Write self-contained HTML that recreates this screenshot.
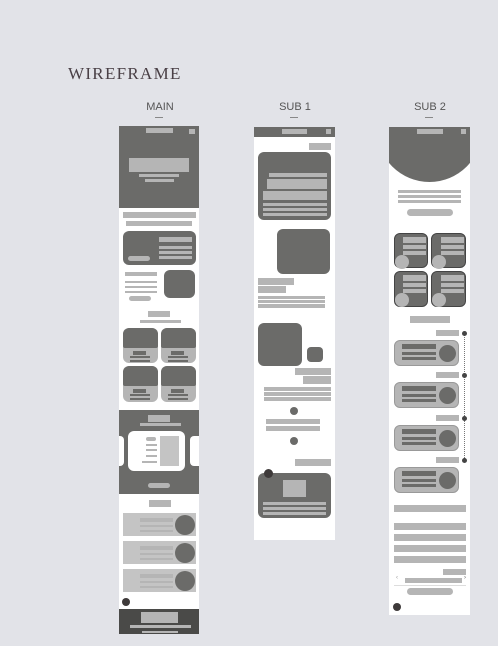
<!DOCTYPE html>
<html><head><meta charset="utf-8"><style>
body{margin:0;width:498px;height:646px;background:#e2e3e8;position:relative;overflow:hidden;font-family:"Liberation Sans",sans-serif}
div{position:absolute;box-sizing:border-box}
.w{background:#fff}.d{background:#6b6b69}.l{background:#b5b5b5}.m{background:#c4c4c4}
.r{border-radius:6px}.p{border-radius:4px}.c{border-radius:50%}
.t{font-size:11px;color:#555;width:60px;text-align:center}
.u{height:1px;width:8px;background:#888}
</style></head><body>
<div style="left:68px;top:64px;font-family:'Liberation Serif',serif;font-size:17px;color:#4a4046;letter-spacing:1.3px">WIREFRAME</div>
<div class="t" style="left:130px;top:101px">MAIN</div><div class="u" style="left:155px;top:117px"></div>
<div class="t" style="left:265px;top:101px">SUB 1</div><div class="u" style="left:290px;top:117px"></div>
<div class="t" style="left:400px;top:101px">SUB 2</div><div class="u" style="left:425px;top:117px"></div>

<!-- MAIN -->
<div class="w" style="left:119px;top:126px;width:80px;height:508px"></div>
<div class="d" style="left:119px;top:126px;width:80px;height:82px"></div>
<div class="l" style="left:146px;top:128px;width:27px;height:5px"></div>
<div class="l" style="left:189px;top:129px;width:6px;height:5px"></div>
<div class="l" style="left:129px;top:158px;width:60px;height:14px"></div>
<div class="l" style="left:139px;top:174px;width:40px;height:3px"></div>
<div class="l" style="left:145px;top:179px;width:29px;height:3px"></div>
<div class="l" style="left:123px;top:212px;width:73px;height:6px"></div>
<div class="l" style="left:126px;top:221px;width:66px;height:5px"></div>
<div class="d r" style="left:123px;top:231px;width:73px;height:34px"></div>
<div class="l" style="left:159px;top:237px;width:33px;height:5px"></div>
<div class="l" style="left:159px;top:246px;width:33px;height:3px"></div>
<div class="l" style="left:159px;top:251px;width:33px;height:3px"></div>
<div class="l" style="left:159px;top:256px;width:33px;height:3px"></div>
<div class="l p" style="left:128px;top:256px;width:22px;height:5px"></div>
<div class="l" style="left:125px;top:272px;width:32px;height:4px"></div>
<div class="l" style="left:125px;top:281px;width:32px;height:2px"></div>
<div class="l" style="left:125px;top:286px;width:32px;height:2px"></div>
<div class="l" style="left:125px;top:291px;width:32px;height:2px"></div>
<div class="l p" style="left:129px;top:296px;width:22px;height:5px"></div>
<div class="d r" style="left:164px;top:270px;width:31px;height:28px"></div>
<div class="l" style="left:148px;top:311px;width:22px;height:6px"></div>
<div class="l" style="left:140px;top:320px;width:41px;height:3px"></div>
<!-- grid -->
<div class="l r" style="left:123px;top:328px;width:35px;height:35px"></div>
<div class="d r" style="left:123px;top:328px;width:35px;height:20px;border-radius:6px 6px 2px 2px"></div>
<div class="l r" style="left:161px;top:328px;width:35px;height:35px"></div>
<div class="d r" style="left:161px;top:328px;width:35px;height:20px;border-radius:6px 6px 2px 2px"></div>
<div class="l r" style="left:123px;top:366px;width:35px;height:36px"></div>
<div class="d r" style="left:123px;top:366px;width:35px;height:20px;border-radius:6px 6px 2px 2px"></div>
<div class="l r" style="left:161px;top:366px;width:35px;height:36px"></div>
<div class="d r" style="left:161px;top:366px;width:35px;height:20px;border-radius:6px 6px 2px 2px"></div>
<div class="d" style="left:133px;top:351px;width:13px;height:4px"></div><div class="d" style="left:130px;top:356px;width:20px;height:2px"></div><div class="d" style="left:130px;top:360px;width:20px;height:2px"></div>
<div class="d" style="left:171px;top:351px;width:13px;height:4px"></div><div class="d" style="left:168px;top:356px;width:20px;height:2px"></div><div class="d" style="left:168px;top:360px;width:20px;height:2px"></div>
<div class="d" style="left:133px;top:389px;width:13px;height:4px"></div><div class="d" style="left:130px;top:394px;width:20px;height:2px"></div><div class="d" style="left:130px;top:398px;width:20px;height:2px"></div>
<div class="d" style="left:171px;top:389px;width:13px;height:4px"></div><div class="d" style="left:168px;top:394px;width:20px;height:2px"></div><div class="d" style="left:168px;top:398px;width:20px;height:2px"></div>
<!-- dark slider -->
<div class="d" style="left:119px;top:410px;width:80px;height:84px"></div>
<div class="l" style="left:148px;top:415px;width:22px;height:7px"></div>
<div class="l" style="left:140px;top:423px;width:41px;height:3px"></div>
<div class="w r" style="left:128px;top:431px;width:57px;height:40px"></div>
<div class="w" style="left:119px;top:436px;width:5px;height:30px;border-radius:0 4px 4px 0"></div>
<div class="w" style="left:190px;top:436px;width:9px;height:30px;border-radius:4px 0 0 4px"></div>
<div class="l p" style="left:146px;top:437px;width:10px;height:4px"></div>
<div class="l" style="left:146px;top:444px;width:11px;height:2px"></div>
<div class="l" style="left:146px;top:449px;width:11px;height:2px"></div>
<div class="l" style="left:146px;top:455px;width:11px;height:2px"></div>
<div class="l" style="left:142px;top:461px;width:15px;height:2px"></div>
<div class="m" style="left:160px;top:436px;width:19px;height:30px"></div>
<div class="l p" style="left:148px;top:483px;width:22px;height:5px"></div>
<div class="l" style="left:149px;top:500px;width:22px;height:7px"></div>
<div class="m" style="left:123px;top:513px;width:73px;height:23px"></div>
<div class="m" style="left:123px;top:541px;width:73px;height:23px"></div>
<div class="m" style="left:123px;top:569px;width:73px;height:23px"></div>
<div class="l" style="left:140px;top:518px;width:33px;height:4px"></div><div class="l" style="left:140px;top:525px;width:33px;height:2px"></div><div class="l" style="left:140px;top:530px;width:33px;height:2px"></div>
<div class="l" style="left:140px;top:546px;width:33px;height:4px"></div><div class="l" style="left:140px;top:553px;width:33px;height:2px"></div><div class="l" style="left:140px;top:558px;width:33px;height:2px"></div>
<div class="l" style="left:140px;top:574px;width:33px;height:4px"></div><div class="l" style="left:140px;top:581px;width:33px;height:2px"></div><div class="l" style="left:140px;top:586px;width:33px;height:2px"></div>
<div class="d c" style="left:175px;top:515px;width:20px;height:20px"></div>
<div class="d c" style="left:175px;top:543px;width:20px;height:20px"></div>
<div class="d c" style="left:175px;top:571px;width:20px;height:20px"></div>
<div class="c" style="left:122px;top:598px;width:8px;height:8px;background:#3e3a3a"></div>
<div style="left:119px;top:609px;width:80px;height:25px;background:#4a4a48"></div>
<div class="l" style="left:141px;top:612px;width:37px;height:11px"></div>
<div class="l" style="left:130px;top:625px;width:61px;height:3px"></div>
<div class="l" style="left:142px;top:631px;width:36px;height:2px"></div>

<!-- SUB 1 -->
<div class="w" style="left:254px;top:127px;width:81px;height:413px"></div>
<div class="d" style="left:254px;top:127px;width:81px;height:10px"></div>
<div class="l" style="left:282px;top:129px;width:25px;height:5px"></div>
<div class="l" style="left:326px;top:129px;width:5px;height:5px"></div>
<div class="l" style="left:309px;top:143px;width:22px;height:7px"></div>
<div class="d r" style="left:258px;top:152px;width:73px;height:68px"></div>
<div class="l" style="left:269px;top:173px;width:58px;height:4px"></div>
<div class="l" style="left:267px;top:179px;width:60px;height:10px"></div>
<div class="l" style="left:263px;top:191px;width:64px;height:9px"></div>
<div class="l" style="left:263px;top:203px;width:64px;height:3px"></div>
<div class="l" style="left:263px;top:208px;width:64px;height:3px"></div>
<div class="l" style="left:263px;top:213px;width:64px;height:3px"></div>
<div class="d r" style="left:277px;top:229px;width:53px;height:45px"></div>
<div class="l" style="left:258px;top:278px;width:36px;height:7px"></div>
<div class="l" style="left:258px;top:286px;width:28px;height:7px"></div>
<div class="l" style="left:258px;top:296px;width:67px;height:3px"></div>
<div class="l" style="left:258px;top:300px;width:67px;height:3px"></div>
<div class="l" style="left:258px;top:304px;width:67px;height:4px"></div>
<div class="d r" style="left:258px;top:323px;width:44px;height:43px"></div>
<div class="d r" style="left:307px;top:347px;width:16px;height:15px;border-radius:4px"></div>
<div class="l" style="left:295px;top:368px;width:36px;height:7px"></div>
<div class="l" style="left:303px;top:376px;width:28px;height:8px"></div>
<div class="l" style="left:264px;top:387px;width:67px;height:4px"></div>
<div class="l" style="left:264px;top:392px;width:67px;height:4px"></div>
<div class="l" style="left:264px;top:397px;width:67px;height:4px"></div>
<div class="d c" style="left:290px;top:407px;width:8px;height:8px"></div>
<div class="l" style="left:266px;top:419px;width:54px;height:5px"></div>
<div class="l" style="left:266px;top:426px;width:54px;height:5px"></div>
<div class="d c" style="left:290px;top:437px;width:8px;height:8px"></div>
<div class="l" style="left:295px;top:459px;width:36px;height:7px"></div>
<div class="d r" style="left:258px;top:473px;width:73px;height:45px"></div>
<div class="c" style="left:264px;top:469px;width:9px;height:9px;background:#3e3a3a"></div>
<div class="l" style="left:283px;top:480px;width:23px;height:17px"></div>
<div class="l" style="left:263px;top:502px;width:63px;height:3px"></div>
<div class="l" style="left:263px;top:507px;width:63px;height:3px"></div>
<div class="l" style="left:263px;top:512px;width:63px;height:3px"></div>

<!-- SUB 2 -->
<div class="w" style="left:389px;top:127px;width:81px;height:488px"></div>
<div style="left:389px;top:127px;width:81px;height:56px;overflow:hidden"><div class="d" style="left:-12px;top:-50px;width:105px;height:105px;border-radius:50%"></div></div>
<div class="l" style="left:417px;top:129px;width:26px;height:5px"></div>
<div class="l" style="left:461px;top:129px;width:5px;height:5px"></div>
<div class="l" style="left:398px;top:190px;width:63px;height:3px"></div>
<div class="l" style="left:398px;top:195px;width:63px;height:3px"></div>
<div class="l" style="left:398px;top:200px;width:63px;height:3px"></div>
<div class="l p" style="left:407px;top:209px;width:46px;height:7px"></div>
<div class="d r" style="left:394px;top:233px;width:34px;height:35px;border:1px solid #444"></div>
<div class="d r" style="left:431px;top:233px;width:35px;height:35px;border:1px solid #444"></div>
<div class="d r" style="left:394px;top:271px;width:34px;height:36px;border:1px solid #444"></div>
<div class="d r" style="left:431px;top:271px;width:35px;height:36px;border:1px solid #444"></div>
<div class="l" style="left:403px;top:237px;width:23px;height:6px"></div><div class="l" style="left:403px;top:245px;width:23px;height:4px"></div><div class="l" style="left:403px;top:251px;width:23px;height:4px"></div>
<div class="l" style="left:441px;top:237px;width:23px;height:6px"></div><div class="l" style="left:441px;top:245px;width:23px;height:4px"></div><div class="l" style="left:441px;top:251px;width:23px;height:4px"></div>
<div class="l" style="left:403px;top:275px;width:23px;height:6px"></div><div class="l" style="left:403px;top:283px;width:23px;height:4px"></div><div class="l" style="left:403px;top:289px;width:23px;height:4px"></div>
<div class="l" style="left:441px;top:275px;width:23px;height:6px"></div><div class="l" style="left:441px;top:283px;width:23px;height:4px"></div><div class="l" style="left:441px;top:289px;width:23px;height:4px"></div>
<div class="l c" style="left:395px;top:255px;width:14px;height:14px"></div>
<div class="l c" style="left:432px;top:255px;width:14px;height:14px"></div>
<div class="l c" style="left:395px;top:293px;width:14px;height:14px"></div>
<div class="l c" style="left:432px;top:293px;width:14px;height:14px"></div>
<div class="l" style="left:410px;top:316px;width:40px;height:7px"></div>
<div style="left:464px;top:333px;width:0;height:127px;border-left:1px dotted #777"></div>
<div class="c" style="left:462px;top:331px;width:5px;height:5px;background:#444"></div>
<div class="c" style="left:462px;top:373px;width:5px;height:5px;background:#444"></div>
<div class="c" style="left:462px;top:416px;width:5px;height:5px;background:#444"></div>
<div class="c" style="left:462px;top:458px;width:5px;height:5px;background:#444"></div>
<div class="l" style="left:436px;top:330px;width:23px;height:6px"></div>
<div class="l" style="left:436px;top:372px;width:23px;height:6px"></div>
<div class="l" style="left:436px;top:415px;width:23px;height:6px"></div>
<div class="l" style="left:436px;top:457px;width:23px;height:6px"></div>
<div class="l r" style="left:394px;top:340px;width:65px;height:26px;border:1px solid #999"></div>
<div class="l r" style="left:394px;top:382px;width:65px;height:26px;border:1px solid #999"></div>
<div class="l r" style="left:394px;top:425px;width:65px;height:26px;border:1px solid #999"></div>
<div class="l r" style="left:394px;top:467px;width:65px;height:26px;border:1px solid #999"></div>
<div class="d" style="left:402px;top:344px;width:34px;height:5px"></div><div class="d" style="left:402px;top:352px;width:34px;height:3px"></div><div class="d" style="left:402px;top:357px;width:34px;height:3px"></div>
<div class="d" style="left:402px;top:386px;width:34px;height:5px"></div><div class="d" style="left:402px;top:394px;width:34px;height:3px"></div><div class="d" style="left:402px;top:399px;width:34px;height:3px"></div>
<div class="d" style="left:402px;top:429px;width:34px;height:5px"></div><div class="d" style="left:402px;top:437px;width:34px;height:3px"></div><div class="d" style="left:402px;top:442px;width:34px;height:3px"></div>
<div class="d" style="left:402px;top:471px;width:34px;height:5px"></div><div class="d" style="left:402px;top:479px;width:34px;height:3px"></div><div class="d" style="left:402px;top:484px;width:34px;height:3px"></div>
<div class="d c" style="left:439px;top:345px;width:17px;height:17px"></div>
<div class="d c" style="left:439px;top:387px;width:17px;height:17px"></div>
<div class="d c" style="left:439px;top:430px;width:17px;height:17px"></div>
<div class="d c" style="left:439px;top:472px;width:17px;height:17px"></div>
<div class="l" style="left:394px;top:505px;width:72px;height:7px"></div>
<div class="l" style="left:394px;top:523px;width:72px;height:7px"></div>
<div class="l" style="left:394px;top:534px;width:72px;height:7px"></div>
<div class="l" style="left:394px;top:545px;width:72px;height:7px"></div>
<div class="l" style="left:394px;top:556px;width:72px;height:7px"></div>
<div class="l" style="left:443px;top:569px;width:23px;height:6px"></div>
<div style="left:396px;top:575px;font-size:6px;color:#999">‹</div>
<div class="l" style="left:405px;top:578px;width:57px;height:5px"></div>
<div style="left:464px;top:575px;font-size:6px;color:#666">›</div>
<div style="left:394px;top:585px;width:72px;height:1px;background:#ddd"></div>
<div class="l p" style="left:407px;top:588px;width:46px;height:7px"></div>
<div class="c" style="left:393px;top:603px;width:8px;height:8px;background:#3e3a3a"></div>
</body></html>
